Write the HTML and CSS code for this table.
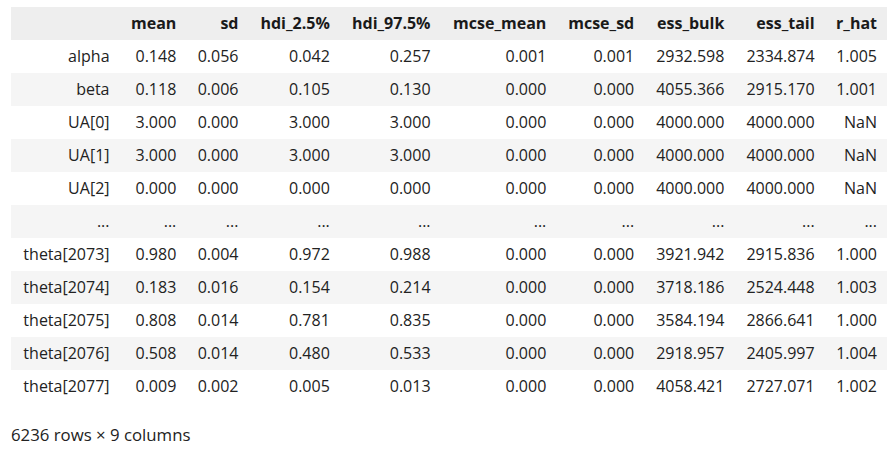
FILE: index.html
```html
<!DOCTYPE html>
<html>
<head>
<meta charset="utf-8">
<link rel="stylesheet" href="styles.css">
</head>
<body>
<div class="output">
<table class="frame">
<thead>
<tr><th></th><th>mean</th><th>sd</th><th>hdi_2.5%</th><th>hdi_97.5%</th><th>mcse_mean</th><th>mcse_sd</th><th>ess_bulk</th><th>ess_tail</th><th>r_hat</th></tr>
</thead>
<tbody>
<tr><th>alpha</th><td>0.148</td><td>0.056</td><td>0.042</td><td>0.257</td><td>0.001</td><td>0.001</td><td>2932.598</td><td>2334.874</td><td>1.005</td></tr>
<tr><th>beta</th><td>0.118</td><td>0.006</td><td>0.105</td><td>0.130</td><td>0.000</td><td>0.000</td><td>4055.366</td><td>2915.170</td><td>1.001</td></tr>
<tr><th>UA[0]</th><td>3.000</td><td>0.000</td><td>3.000</td><td>3.000</td><td>0.000</td><td>0.000</td><td>4000.000</td><td>4000.000</td><td>NaN</td></tr>
<tr><th>UA[1]</th><td>3.000</td><td>0.000</td><td>3.000</td><td>3.000</td><td>0.000</td><td>0.000</td><td>4000.000</td><td>4000.000</td><td>NaN</td></tr>
<tr><th>UA[2]</th><td>0.000</td><td>0.000</td><td>0.000</td><td>0.000</td><td>0.000</td><td>0.000</td><td>4000.000</td><td>4000.000</td><td>NaN</td></tr>
<tr><th>...</th><td>...</td><td>...</td><td>...</td><td>...</td><td>...</td><td>...</td><td>...</td><td>...</td><td>...</td></tr>
<tr><th>theta[2073]</th><td>0.980</td><td>0.004</td><td>0.972</td><td>0.988</td><td>0.000</td><td>0.000</td><td>3921.942</td><td>2915.836</td><td>1.000</td></tr>
<tr><th>theta[2074]</th><td>0.183</td><td>0.016</td><td>0.154</td><td>0.214</td><td>0.000</td><td>0.000</td><td>3718.186</td><td>2524.448</td><td>1.003</td></tr>
<tr><th>theta[2075]</th><td>0.808</td><td>0.014</td><td>0.781</td><td>0.835</td><td>0.000</td><td>0.000</td><td>3584.194</td><td>2866.641</td><td>1.000</td></tr>
<tr><th>theta[2076]</th><td>0.508</td><td>0.014</td><td>0.480</td><td>0.533</td><td>0.000</td><td>0.000</td><td>2918.957</td><td>2405.997</td><td>1.004</td></tr>
<tr><th>theta[2077]</th><td>0.009</td><td>0.002</td><td>0.005</td><td>0.013</td><td>0.000</td><td>0.000</td><td>4058.421</td><td>2727.071</td><td>1.002</td></tr>
</tbody>
</table>
<p class="shape">6236 rows × 9 columns</p>
</div>
</body>
</html>
```

FILE: styles.css
```css
html, body {
  margin: 0;
  padding: 0;
  background: #ffffff;
}
body {
  font-family: "Open Sans", "Noto Sans", sans-serif;
  font-size: 16px;
  color: #222222;
}
.output {
  padding: 7px 0 0 11px;
}
.frame {
  border-collapse: collapse;
  border-spacing: 0;
  width: 876px;
}
.frame th, .frame td {
  text-align: right;
  padding: 6px 10px;
  line-height: 21px;
  white-space: nowrap;
}
.frame thead th {
  font-weight: 700;
  background: #eeeeee;
  color: #1a1a1a;
}
.frame tbody th {
  font-weight: 400;
}
.frame tbody tr:nth-child(even) {
  background: #f5f5f5;
}
.shape {
  margin: 21px 0 0 0;
  font-size: 16.8px;
  line-height: 21px;
}
```
